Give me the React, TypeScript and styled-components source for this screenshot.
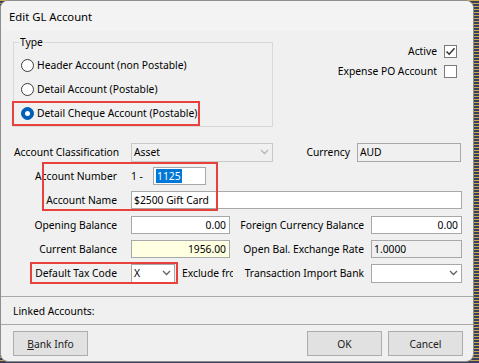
import React from "react";
import styled, { createGlobalStyle } from "styled-components";

const GlobalStyle = createGlobalStyle`
  html, body {
    margin: 0;
    padding: 0;
  }
  body {
    width: 479px;
    height: 363px;
    overflow: hidden;
    background: repeating-linear-gradient(0deg, #3b3f5c 0px, #3b3f5c 2px, #c9a94e 2px, #c9a94e 3px);
    font-family: "Noto Sans", "Open Sans", sans-serif;
    font-size: 10.3px;
    color: #000;
  }
`;

const Window = styled.div`
  position: relative;
  width: 474px;
  height: 362px;
  box-sizing: border-box;
  border: 1px solid #8e8e8e;
  border-radius: 8px;
  background: #f0f0f0;
  display: flex;
  flex-direction: column;
  overflow: hidden;
`;

const TitleBar = styled.div`
  height: 30px;
  flex: none;
  display: flex;
  align-items: center;
  padding-left: 8px;
  background: #f3f3f3;
  font-size: 11.3px;
`;

const TopSection = styled.div`
  display: flex;
  align-items: flex-start;
  padding: 3px 16px 0 12px;
`;

const GroupBox = styled.fieldset`
  margin: 0;
  width: 260px;
  box-sizing: border-box;
  padding: 0 0 1px 5px;
  border: 1px solid #d9d9d9;
  legend {
    padding: 0 1px;
    line-height: 16px;
  }
`;

const RadioList = styled.div`
  display: flex;
  flex-direction: column;
  margin-top: 3px;
`;

const RadioRow = styled.label`
  display: flex;
  align-items: center;
  height: 24px;
  gap: 3px;
  padding-left: 2px;
`;

const RadioDot = styled.span<{ $on?: boolean }>`
  width: 13px;
  height: 13px;
  box-sizing: border-box;
  border-radius: 50%;
  border: 1px solid ${(p) => (p.$on ? "#005fb8" : "#3c3c3c")};
  background: ${(p) => (p.$on ? "#005fb8" : "#fff")};
  display: flex;
  align-items: center;
  justify-content: center;
  &::after {
    content: "";
    display: ${(p) => (p.$on ? "block" : "none")};
    width: 5px;
    height: 5px;
    border-radius: 50%;
    background: #fff;
  }
`;

const CheckColumn = styled.div`
  margin-left: auto;
  margin-top: 7px;
  display: flex;
  flex-direction: column;
  align-items: flex-end;
`;

const CheckRow = styled.label`
  display: flex;
  align-items: center;
  gap: 7px;
  height: 20px;
`;

const CheckBox = styled.span`
  width: 13px;
  height: 13px;
  box-sizing: border-box;
  border: 1px solid #7a7a7a;
  background: #fff;
  display: flex;
  align-items: center;
  justify-content: center;
`;

const Form = styled.div`
  display: flex;
  flex-direction: column;
  margin-top: 13px;
  padding-left: 13px;
`;

const Row = styled.div<{ $push?: number }>`
  display: flex;
  align-items: center;
  height: 24px;
  margin-top: ${(p) => p.$push ?? 0}px;
`;

const Label = styled.span<{ $w: number; $left?: boolean }>`
  width: ${(p) => p.$w}px;
  flex: none;
  text-align: ${(p) => (p.$left ? "left" : "right")};
  white-space: nowrap;
`;

const Field = styled.div<{
  $w: number;
  $ml?: number;
  $bg?: string;
  $right?: boolean;
  $dim?: boolean;
  $h?: number;
}>`
  width: ${(p) => p.$w}px;
  height: ${(p) => p.$h ?? 18}px;
  margin-left: ${(p) => p.$ml ?? 0}px;
  flex: none;
  box-sizing: border-box;
  border: 1px solid ${(p) => (p.$dim ? "#c8c8c8" : "#a8a8a8")};
  background: ${(p) => p.$bg ?? "#fff"};
  display: flex;
  align-items: center;
  justify-content: ${(p) => (p.$right ? "flex-end" : "space-between")};
  padding: 0 3px 0 2px;
  white-space: nowrap;
`;

const Prefix = styled.span`
  margin-left: 14px;
  width: 22px;
  flex: none;
`;

const Selected = styled.span`
  background: #0078d7;
  color: #fff;
  padding: 0 1px;
  line-height: 14px;
`;

const Clipped = styled.span`
  width: 51px;
  margin-left: 7px;
  overflow: hidden;
  white-space: nowrap;
  flex: none;
`;

const Divider = styled.div<{ $mt?: number }>`
  height: 1px;
  background: #a9a9a9;
  margin-top: ${(p) => p.$mt ?? 0}px;
  flex: none;
`;

const Linked = styled.div`
  height: 27px;
  display: flex;
  align-items: center;
  padding-left: 12px;
`;

const ButtonBar = styled.div`
  display: flex;
  gap: 6px;
  padding: 6px 10px 0 12px;
`;

const Button = styled.button<{ $push?: boolean }>`
  width: 75px;
  height: 25px;
  box-sizing: border-box;
  border: 1px solid #adadad;
  background: #e1e1e1;
  font: inherit;
  color: #222;
  margin-left: ${(p) => (p.$push ? "auto" : "0")};
  padding: 0;
  u {
    text-decoration: underline;
  }
`;

const Highlight = styled.div`
  position: absolute;
  border: 2px solid #e8403c;
  box-sizing: border-box;
  pointer-events: none;
`;

const Chevron: React.FC<{ color?: string }> = ({ color = "#606060" }) => (
  <svg width="9" height="6" viewBox="0 0 9 6">
    <path d="M1 1 L4.5 4.5 L8 1" fill="none" stroke={color} strokeWidth="1.3" />
  </svg>
);

const App: React.FC = () => {
  return (
    <>
      <GlobalStyle />
      <Window>
        <TitleBar>Edit GL Account</TitleBar>

        <TopSection>
          <GroupBox>
            <legend>Type</legend>
            <RadioList>
              <RadioRow>
                <RadioDot />
                Header Account (non Postable)
              </RadioRow>
              <RadioRow>
                <RadioDot />
                Detail Account (Postable)
              </RadioRow>
              <RadioRow>
                <RadioDot $on />
                Detail Cheque Account (Postable)
              </RadioRow>
            </RadioList>
          </GroupBox>

          <CheckColumn>
            <CheckRow>
              Active
              <CheckBox>
                <svg width="11" height="11" viewBox="0 0 11 11">
                  <path d="M1.5 5.5 L4.2 8.2 L9.5 2.2" fill="none" stroke="#333" strokeWidth="1.5" />
                </svg>
              </CheckBox>
            </CheckRow>
            <CheckRow>
              Expense PO Account
              <CheckBox />
            </CheckRow>
          </CheckColumn>
        </TopSection>

        <Form>
          <Row>
            <Label $w={103} $left>Account Classification</Label>
            <Field $w={142} $ml={14} $h={19} $bg="#f0f0f0" $dim>
              Asset
              <Chevron color="#b5b5b5" />
            </Field>
            <Label $w={77}>Currency</Label>
            <Field $w={104} $ml={7} $h={19} $bg="#f0f0f0">AUD</Field>
          </Row>
          <Row>
            <Label $w={103}>Account Number</Label>
            <Prefix>1 -</Prefix>
            <Field $w={53}>
              <Selected>1125</Selected>
            </Field>
          </Row>
          <Row>
            <Label $w={103}>Account Name</Label>
            <Field $w={331} $ml={14}>$2500 Gift Card</Field>
          </Row>
          <Row $push={1}>
            <Label $w={103}>Opening Balance</Label>
            <Field $w={99} $ml={14} $right>0.00</Field>
            <Label $w={134}>Foreign Currency Balance</Label>
            <Field $w={91} $ml={7} $right>0.00</Field>
          </Row>
          <Row>
            <Label $w={103}>Current Balance</Label>
            <Field $w={99} $ml={14} $right $bg="#ffffe1">1956.00</Field>
            <Label $w={134}>Open Bal. Exchange Rate</Label>
            <Field $w={91} $ml={7} $bg="#f0f0f0">1.0000</Field>
          </Row>
          <Row>
            <Label $w={103}>Default Tax Code</Label>
            <Field $w={44} $ml={14} $h={19}>
              X
              <Chevron />
            </Field>
            <Clipped>Exclude from</Clipped>
            <Label $w={131}>Transaction Import Bank</Label>
            <Field $w={91} $ml={7} $h={19}>
              <span />
              <Chevron />
            </Field>
          </Row>
        </Form>

        <Divider $mt={11} />
        <Linked>Linked Accounts:</Linked>
        <Divider />

        <ButtonBar>
          <Button>
            <u>B</u>ank Info
          </Button>
          <Button $push>OK</Button>
          <Button>Cancel</Button>
        </ButtonBar>

        <Highlight style={{ left: 11, top: 100, width: 188, height: 25 }} />
        <Highlight style={{ left: 41, top: 161, width: 176, height: 49 }} />
        <Highlight style={{ left: 29, top: 261, width: 148, height: 22 }} />
      </Window>
    </>
  );
};

export default App;
